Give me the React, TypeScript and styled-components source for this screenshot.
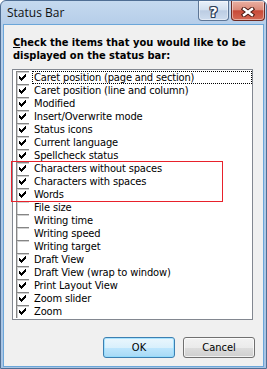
import React from 'react';
import styled, { createGlobalStyle } from 'styled-components';

const GlobalStyle = createGlobalStyle`
  html, body { margin: 0; padding: 0; background: #ffffff; }
  body { width: 267px; height: 369px; overflow: hidden; }
  *, *::before, *::after { box-sizing: border-box; }
`;

const Window = styled.div`
  width: 267px;
  height: 369px;
  display: flex;
  flex-direction: column;
  border: 1px solid #4f6e94;
  border-radius: 6px 6px 0 0;
  background: linear-gradient(#c5d9ef 0px, #b6cee9 23px, #a8c4e4 100%);
  overflow: hidden;
`;

const TitleBar = styled.div`
  height: 23px;
  flex: none;
  display: flex;
  align-items: flex-start;
  gap: 2px;
  padding-right: 1px;
`;

const Title = styled.div`
  flex: 1;
  padding: 4px 0 0 6px;
  font: 12px/16px "Open Sans", "Noto Sans", sans-serif;
  color: #111111;
`;

const CaptionButton = styled.div<{ $close?: boolean }>`
  width: ${p => (p.$close ? 34 : 31)}px;
  height: 20px;
  border: 1px solid ${p => (p.$close ? '#6e2a22' : '#5d7696')};
  border-top: none;
  border-radius: 0 0 4px 4px;
  background: ${p =>
    p.$close
      ? 'linear-gradient(#eab0a2 0%, #dc8c7c 45%, #c84a38 52%, #d56a55 100%)'
      : 'linear-gradient(#e8f0f9 0%, #d3e0ef 45%, #bccde3 52%, #cddcee 100%)'};
  box-shadow: inset 0 0 0 1px rgba(255, 255, 255, 0.45);
  display: flex;
  align-items: center;
  justify-content: center;
`;

const HelpGlyph = styled.span`
  font: bold 14px/14px "DejaVu Sans", sans-serif;
  color: #ffffff;
  margin-top: 2px;
  text-shadow: 1px 0 0 #2e3f57, -1px 0 0 #2e3f57, 0 1px 0 #2e3f57, 0 -1px 0 #2e3f57,
    1px 1px 0 #2e3f57, -1px -1px 0 #2e3f57, 1px -1px 0 #2e3f57, -1px 1px 0 #2e3f57;
`;

const Client = styled.div`
  flex: 1;
  margin: 0 2px 1px 2px;
  border: 1px solid #6ba6d9;
  background: #f0f0f0;
  display: flex;
  flex-direction: column;
  padding: 11px 8px 8px 8px;
`;

const Heading = styled.div`
  margin-left: 1px;
  width: 242px;
  font: bold 11px/13px "DejaVu Sans Condensed", "DejaVu Sans", sans-serif;
  color: #000000;
`;

const ListBox = styled.div`
  position: relative;
  width: 241px;
  height: 251px;
  margin-top: 7px;
  border: 1px solid #828790;
  background: #ffffff;
  padding: 1px 0;
`;

const Row = styled.div`
  height: 13px;
  display: flex;
  align-items: stretch;
  padding-left: 3px;
`;

const Box = styled.span`
  flex: none;
  width: 13px;
  height: 13px;
  border-top: 1px solid #858585;
  border-left: 1px solid #858585;
  box-shadow: inset 1px 1px 0 #d0d0d0;
  background: #ffffff;
  display: block;
  position: relative;
`;

const Mark = styled.svg`
  position: absolute;
  left: -1px;
  top: -1px;
`;

const Label = styled.span<{ $focus?: boolean }>`
  flex: 1;
  margin-left: 3px;
  padding: 0 1px;
  font: 11px/11px "DejaVu Sans Condensed", "DejaVu Sans", sans-serif;
  letter-spacing: -0.15px;
  color: #000000;
  white-space: nowrap;
  border: 1px dotted ${p => (p.$focus ? '#000000' : 'transparent')};
`;

const Highlight = styled.div`
  position: absolute;
  left: -2px;
  top: 91px;
  width: 212px;
  height: 41px;
  border: 1px solid #e8212b;
  pointer-events: none;
`;

const ButtonRow = styled.div`
  margin-top: 17px;
  display: flex;
  justify-content: flex-end;
  gap: 8px;
`;

const Button = styled.div<{ $default?: boolean }>`
  width: 72px;
  height: 21px;
  border: 1px solid ${p => (p.$default ? '#3c7fb1' : '#707070')};
  border-radius: 3px;
  background: ${p =>
    p.$default
      ? 'linear-gradient(#eaf6fd 0%, #d9f0fc 50%, #bee6fd 51%, #a7d9f5 100%)'
      : 'linear-gradient(#f2f2f2 0%, #ebebeb 50%, #dddddd 51%, #cfcfcf 100%)'};
  box-shadow: inset 0 0 0 1px ${p => (p.$default ? 'rgba(140, 220, 255, 0.7)' : 'rgba(255,255,255,0.7)')};
  display: flex;
  align-items: center;
  justify-content: center;
  font: 11px/13px "DejaVu Sans Condensed", "DejaVu Sans", sans-serif;
  color: #000000;
`;

const CHECK_COLS: [number, number][] = [
  [3, 5], [4, 6], [5, 7], [6, 6], [7, 5], [8, 4], [9, 3],
];

const CheckMark = () => (
  <Mark width="13" height="13" viewBox="0 0 13 13" shapeRendering="crispEdges">
    {CHECK_COLS.map(([x, y]) => (
      <rect key={x} x={x} y={y} width="1" height="3" fill="#000000" />
    ))}
  </Mark>
);

const CloseGlyph = () => (
  <svg width="14" height="10" viewBox="0 0 14 10" style={{ marginTop: 2 }}>
    <path d="M3 2 L11 8 M11 2 L3 8" stroke="#4b1a13" strokeWidth="4.4" strokeLinecap="square" fill="none" />
    <path d="M3 2 L11 8 M11 2 L3 8" stroke="#ffffff" strokeWidth="2.4" strokeLinecap="square" fill="none" />
  </svg>
);

const ITEMS: { label: string; checked: boolean }[] = [
  { label: 'Caret position (page and section)', checked: true },
  { label: 'Caret position (line and column)', checked: true },
  { label: 'Modified', checked: true },
  { label: 'Insert/Overwrite mode', checked: true },
  { label: 'Status icons', checked: true },
  { label: 'Current language', checked: true },
  { label: 'Spellcheck status', checked: true },
  { label: 'Characters without spaces', checked: true },
  { label: 'Characters with spaces', checked: true },
  { label: 'Words', checked: true },
  { label: 'File size', checked: false },
  { label: 'Writing time', checked: false },
  { label: 'Writing speed', checked: false },
  { label: 'Writing target', checked: false },
  { label: 'Draft View', checked: true },
  { label: 'Draft View (wrap to window)', checked: true },
  { label: 'Print Layout View', checked: true },
  { label: 'Zoom slider', checked: true },
  { label: 'Zoom', checked: true },
];

export default function App() {
  return (
    <>
      <GlobalStyle />
      <Window>
        <TitleBar>
          <Title>Status Bar</Title>
          <CaptionButton>
            <HelpGlyph>?</HelpGlyph>
          </CaptionButton>
          <CaptionButton $close>
            <CloseGlyph />
          </CaptionButton>
        </TitleBar>
        <Client>
          <Heading>
            <u>C</u>heck the items that you would like to be displayed on the status bar:
          </Heading>
          <ListBox>
            {ITEMS.map((item, i) => (
              <Row key={item.label}>
                <Box>{item.checked && <CheckMark />}</Box>
                <Label $focus={i === 0}>{item.label}</Label>
              </Row>
            ))}
            <Highlight />
          </ListBox>
          <ButtonRow>
            <Button $default>OK</Button>
            <Button>Cancel</Button>
          </ButtonRow>
        </Client>
      </Window>
    </>
  );
}
